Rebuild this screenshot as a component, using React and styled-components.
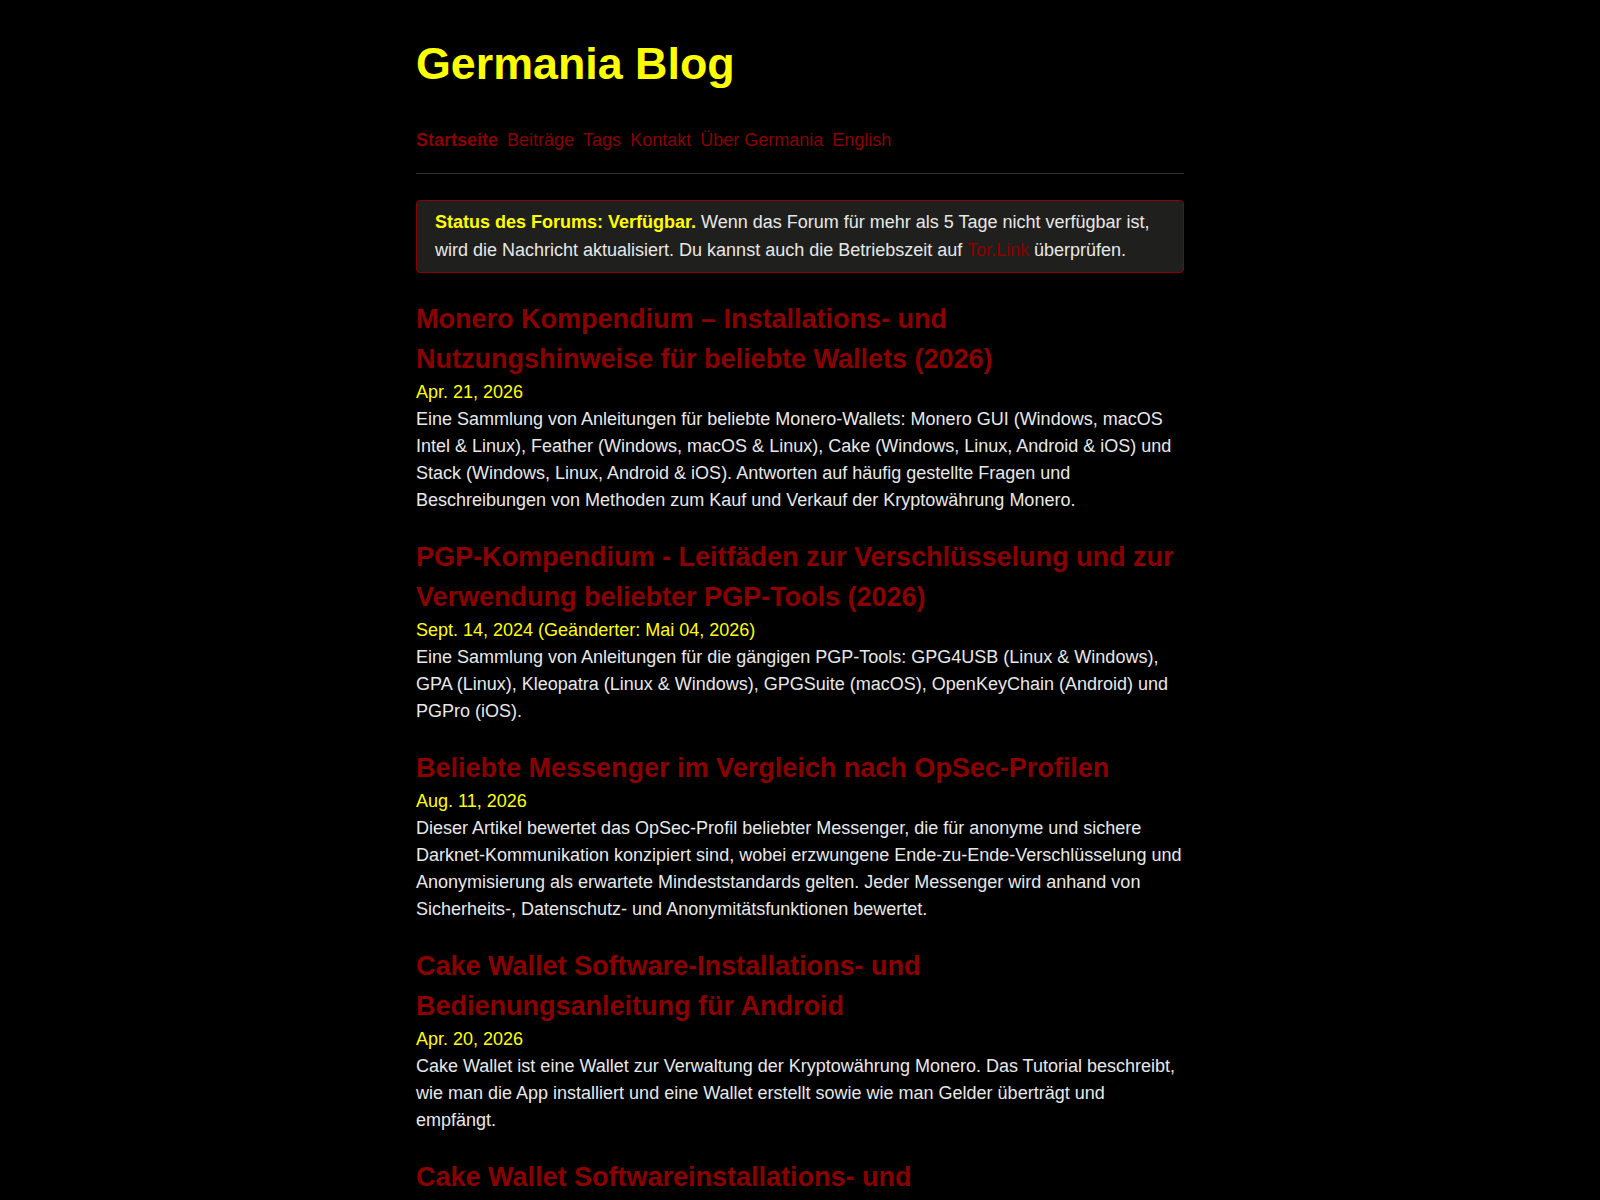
import React from 'react'
import styled, { createGlobalStyle } from 'styled-components'

const GlobalStyle = createGlobalStyle`
    html, body {
        margin: 0;
        padding: 0;
        background-color: #000;
    }
    body {
        font-family: "Liberation Sans", Arial, sans-serif;
        color: #e8e8e8;
        font-size: 18px;
        line-height: 1.5;
    }
`

const posts = [
    {
        title: 'Monero Kompendium – Installations- und Nutzungshinweise für beliebte Wallets (2026)',
        date: 'Apr. 21, 2026',
        text: 'Eine Sammlung von Anleitungen für beliebte Monero-Wallets: Monero GUI (Windows, macOS Intel & Linux), Feather (Windows, macOS & Linux), Cake (Windows, Linux, Android & iOS) und Stack (Windows, Linux, Android & iOS). Antworten auf häufig gestellte Fragen und Beschreibungen von Methoden zum Kauf und Verkauf der Kryptowährung Monero.',
    },
    {
        title: 'PGP-Kompendium - Leitfäden zur Verschlüsselung und zur Verwendung beliebter PGP-Tools (2026)',
        date: 'Sept. 14, 2024 (Geänderter: Mai 04, 2026)',
        text: 'Eine Sammlung von Anleitungen für die gängigen PGP-Tools: GPG4USB (Linux & Windows), GPA (Linux), Kleopatra (Linux & Windows), GPGSuite (macOS), OpenKeyChain (Android) und PGPro (iOS).',
    },
    {
        title: 'Beliebte Messenger im Vergleich nach OpSec-Profilen',
        date: 'Aug. 11, 2026',
        text: 'Dieser Artikel bewertet das OpSec-Profil beliebter Messenger, die für anonyme und sichere Darknet-Kommunikation konzipiert sind, wobei erzwungene Ende-zu-Ende-Verschlüsselung und Anonymisierung als erwartete Mindeststandards gelten. Jeder Messenger wird anhand von Sicherheits-, Datenschutz- und Anonymitätsfunktionen bewertet.',
    },
    {
        title: 'Cake Wallet Software-Installations- und Bedienungsanleitung für Android',
        date: 'Apr. 20, 2026',
        text: 'Cake Wallet ist eine Wallet zur Verwaltung der Kryptowährung Monero. Das Tutorial beschreibt, wie man die App installiert und eine Wallet erstellt sowie wie man Gelder überträgt und empfängt.',
    },
    {
        title: 'Cake Wallet Softwareinstallations- und Bedienungsanleitung für iOS',
        date: 'Apr. 20, 2026',
        text: 'Cake Wallet ist eine Wallet zur Verwaltung der Kryptowährung Monero. Das Tutorial beschreibt, wie man die App auf dem iPhone installiert und eine Wallet erstellt sowie wie man Gelder überträgt und empfängt.',
    },
]

const navItems = ['Startseite', 'Beiträge', 'Tags', 'Kontakt', 'Über Germania', 'English']

function App() {
    return (
        <>
            <GlobalStyle />
            <Page>
                <Header>
                    <Title>Germania Blog</Title>
                    <Nav>
                        {navItems.map((item, i) => (
                            <NavLink key={item} href="#" $active={i === 0}>
                                {item}
                            </NavLink>
                        ))}
                    </Nav>
                </Header>

                <StatusBox>
                    <StatusLabel>Status des Forums: Verfügbar.</StatusLabel> Wenn das Forum für mehr als 5 Tage nicht
                    verfügbar ist, wird die Nachricht aktualisiert. Du kannst auch die Betriebszeit auf{' '}
                    <InlineLink href="#">Tor.Link</InlineLink> überprüfen.
                </StatusBox>

                {posts.map((post) => (
                    <Post key={post.title}>
                        <PostTitle href="#">{post.title}</PostTitle>
                        <PostDate>{post.date}</PostDate>
                        <PostText>{post.text}</PostText>
                    </Post>
                ))}
            </Page>
        </>
    )
}

export default App

const Page = styled.div`
    max-width: 768px;
    margin: 0 auto;
    padding: 37px 0 40px;
`

const Header = styled.header`
    border-bottom: 1px solid #333;
    padding-bottom: 19px;
    margin-bottom: 26px;
`

const Title = styled.h1`
    margin: 0 0 36px;
    font-size: 44.8px;
    line-height: 1.2;
    font-weight: 700;
    color: #ffff00;
`

const Nav = styled.nav`
    display: flex;
    gap: 9px;
    font-size: 18px;
    line-height: 1.5;
`

const NavLink = styled.a`
    color: #8b0000;
    text-decoration: none;
    font-weight: ${(p) => (p.$active ? 700 : 400)};
`

const StatusBox = styled.div`
    background-color: #1f201d;
    border: 1px solid #8b0000;
    border-radius: 4px;
    padding: 7px 18px 8px;
    margin-bottom: 26px;
    line-height: 28px;
`

const StatusLabel = styled.strong`
    color: #ffff00;
`

const InlineLink = styled.a`
    color: #8b0000;
    text-decoration: none;
`

const Post = styled.article`
    margin-bottom: 23px;
`

const PostTitle = styled.a`
    display: block;
    font-size: 27px;
    line-height: 40px;
    font-weight: 700;
    color: #8b0000;
    text-decoration: none;
`

const PostDate = styled.div`
    color: #ffff00;
    line-height: 27px;
`

const PostText = styled.p`
    margin: 0;
    line-height: 27px;
`
